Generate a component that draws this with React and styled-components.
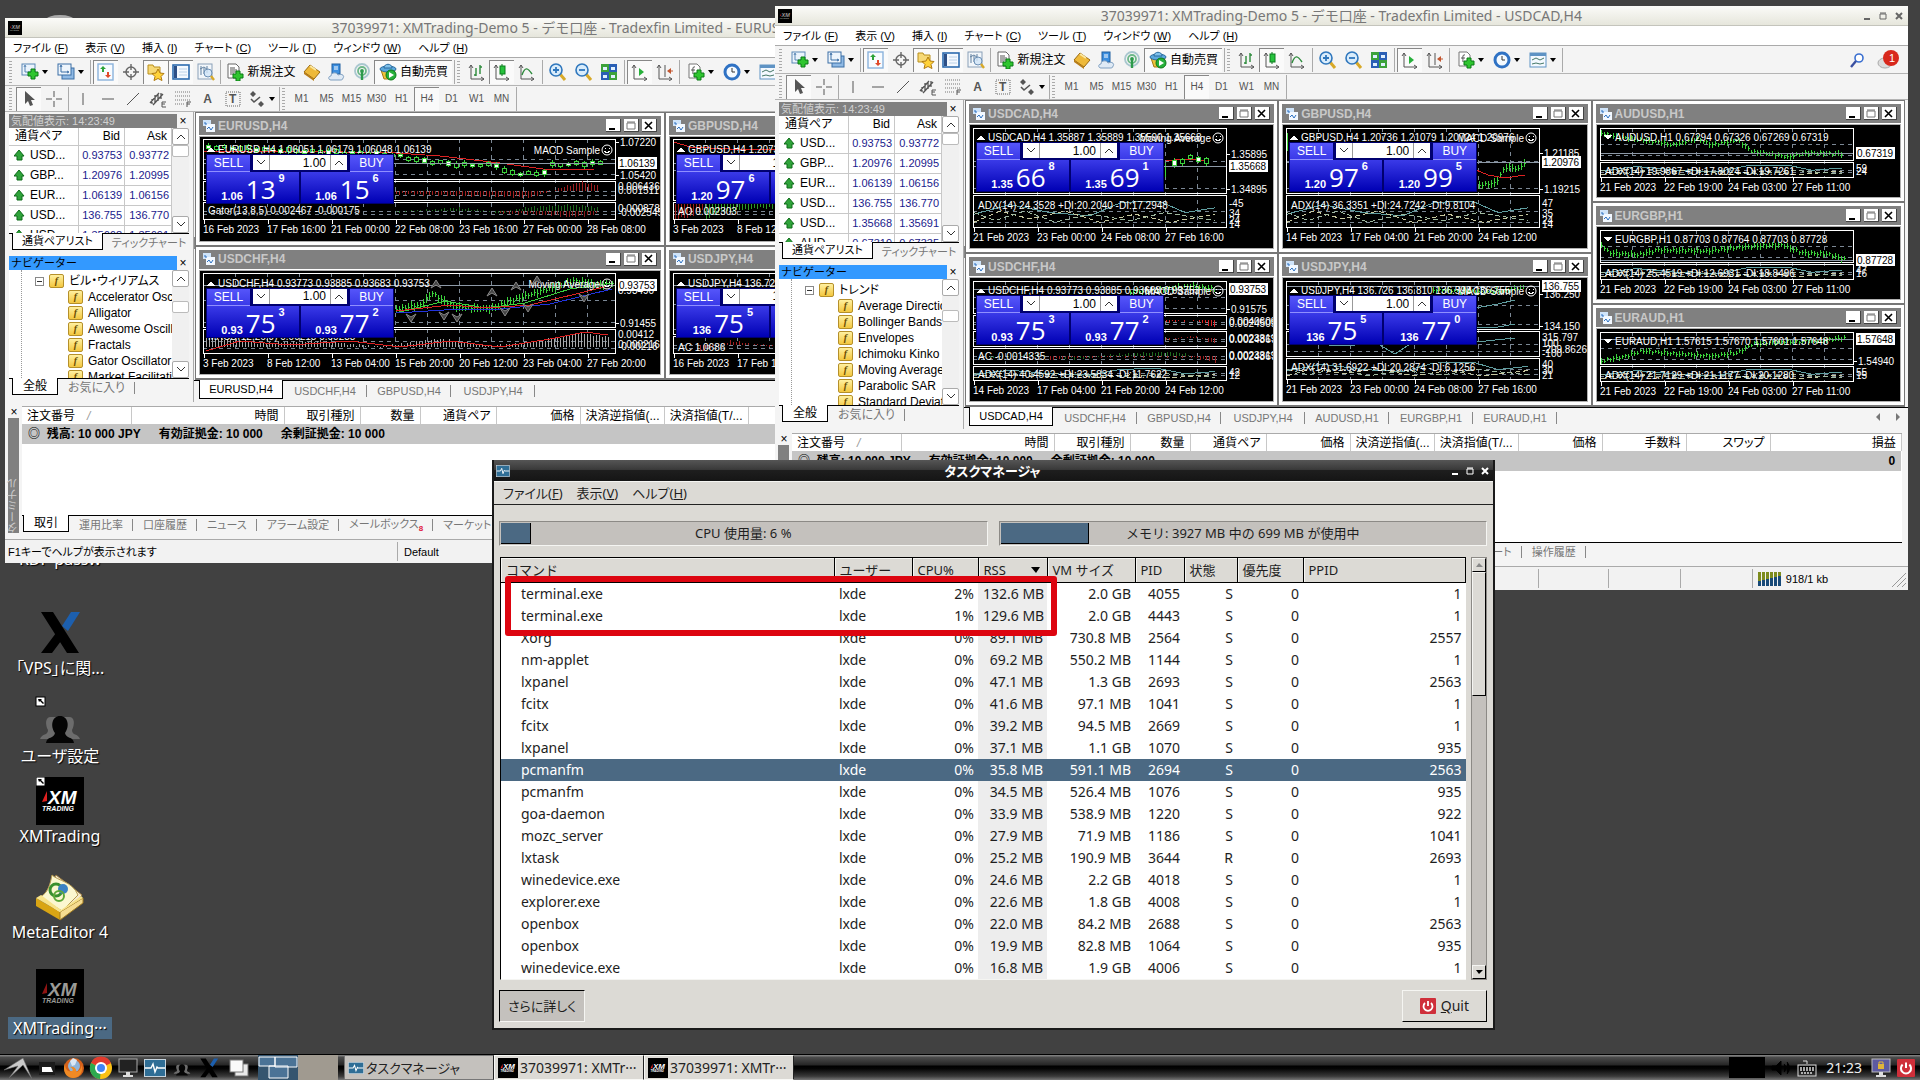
import React from "react";
import styled, { createGlobalStyle, css } from "styled-components";

const GlobalStyle = createGlobalStyle`
  * {
    box-sizing: border-box;
  }

  body {
    margin: 0;
    background: #414141;
    overflow: hidden;
  }

  button,
  input {
    font: inherit;
    color: inherit;
    margin: 0;
    padding: 0;
    border: 0;
    background: none;
    border-radius: 0;
  }

  table {
    border-collapse: collapse;
    table-layout: fixed;
    width: 100%;
  }

  td,
  th {
    padding: 0;
    font-weight: inherit;
    text-align: left;
    overflow: hidden;
    white-space: nowrap;
  }

  a {
    color: inherit;
    text-decoration: none;
  }

  svg {
    display: block;
    flex: none;
  }
`;

const uiFont = `"Noto Sans", "Noto Sans CJK JP", sans-serif`;
const mtFont = `"Liberation Sans", "Noto Sans CJK JP", sans-serif`;

/* ---------- toolbar icons ---------- */

const Plus = ({ x, y }) => (
  <path
    d={`M${x + 3} ${y}h4v3h3v4h-3v3h-4v-3h-3v-4h3z`}
    fill="#2fc52f"
    stroke="#0b7a16"
    strokeWidth="1"
  />
);

const icons = {
  newChart: (
    <>
      <rect x="1" y="1" width="13" height="11" fill="#eaf3fc" stroke="#5a87b5" />
      <path d="M4 3v6h7M3 4l1-2 1 2" stroke="#5a87b5" fill="none" />
      <Plus x={7} y={6} />
    </>
  ),
  profiles: (
    <>
      <rect x="5" y="5" width="12" height="11" fill="#8fb9e4" stroke="#3b6ea5" />
      <rect x="1" y="1" width="13" height="11" fill="#eef5fc" stroke="#3b6ea5" />
      <path d="M4 3v6h7M3 4l1-2 1 2M10 8l2 1-2 1" stroke="#3b6ea5" fill="none" />
    </>
  ),
  watch: (
    <>
      <rect x="1" y="1" width="15" height="16" fill="#f7fbff" stroke="#8ab2dc" strokeWidth="1.4" />
      <path d="M6 3l3 3H7v3H5V6H3z" fill="#2ca33a" />
      <path d="M11 15l-3-3h2V9h2v3h2z" fill="#e04a2a" />
    </>
  ),
  cross: (
    <g stroke="#666" fill="none" strokeWidth="1.4">
      <circle cx="9" cy="9" r="5" />
      <path d="M9 1v6M9 11v6M1 9h6M11 9h6" />
    </g>
  ),
  favorites: (
    <>
      <path d="M1 2h5l1 2h6v7H1z" fill="#f7d976" stroke="#b98f1d" />
      <path d="M11 6l2 4 4 .5-3 3 1 4-4-2-4 2 1-4-3-3 4-.5z" fill="#ffd23a" stroke="#b07a10" />
    </>
  ),
  terminal: (
    <>
      <rect x="1" y="2" width="16" height="14" fill="#f4f9ff" stroke="#2d6cb0" strokeWidth="1.6" />
      <rect x="2" y="3" width="3" height="12" fill="#2d4f86" />
      <path d="M7 6h8M7 9h8M7 12h8" stroke="#bcd2e8" />
    </>
  ),
  tester: (
    <>
      <rect x="1" y="1" width="14" height="15" fill="#f2f6fa" stroke="#8aa0b8" />
      <path d="M4 3v9M7 5v6M10 3v7M3 6l4-2 4 3" stroke="#5f7f9f" fill="none" />
      <circle cx="11" cy="10" r="4" fill="#cfe5f8" fillOpacity=".8" stroke="#6b8fb5" />
      <path d="M14 13l3 4" stroke="#d8a928" strokeWidth="2.4" />
    </>
  ),
  order: (
    <>
      <path d="M2 1h8l3 3v11H2z" fill="#fff" stroke="#666" />
      <path d="M4 5h5M4 7h7M4 9h7M4 11h4" stroke="#555" />
      <Plus x={7} y={8} />
    </>
  ),
  book: (
    <>
      <path d="M7 2l10 7-6 7L1 9z" fill="#eeb93a" stroke="#9a6a10" />
      <path d="M1 9l10 7v2L1 11z" fill="#b87d18" />
      <path d="M7 3l6 4" stroke="#fbe7a0" strokeWidth="2" />
    </>
  ),
  cloud: (
    <>
      <rect x="4" y="1" width="8" height="10" fill="#3c8fe0" stroke="#1f5f9f" />
      <path d="M6 4h4M6 6h4" stroke="#fff" />
      <path d="M3 17c-3 0-3-4 0-4 0-4 6-4 7-1 4-2 7 1 5 3 0 2-2 2-3 2z" fill="#dfeaf5" stroke="#7f9fc0" />
    </>
  ),
  signal: (
    <g fill="none" strokeWidth="1.8">
      <circle cx="9" cy="8" r="7" stroke="#a9c7cf" />
      <circle cx="9" cy="8" r="4" stroke="#6db889" />
      <circle cx="9" cy="8" r="1" stroke="#2c9a4b" />
      <path d="M9 9v8" stroke="#2c9a4b" strokeWidth="2.4" />
    </g>
  ),
  auto: (
    <>
      <path d="M2 7h14l-2 9H5z" fill="#f0c23a" stroke="#a77a16" />
      <ellipse cx="9" cy="6" rx="8" ry="3" fill="#5ba8dd" stroke="#2a6b9f" />
      <path d="M5 5c0-5 8-5 8 0z" fill="#7fc0ea" stroke="#2a6b9f" />
      <circle cx="12" cy="12" r="5" fill="#27b03b" stroke="#0b7a16" />
      <path d="M10 9l5 3-5 3z" fill="#fff" />
    </>
  ),
  bars: (
    <>
      <path d="M3 2v14h13M1 5l2-3 2 3M13 14l3 2-3 2" stroke="#555" fill="none" />
      <path d="M8 5v8M8 12h-2M12 2v9M12 4h2" stroke="#2b8a3a" fill="none" strokeWidth="1.4" />
    </>
  ),
  candles: (
    <>
      <path d="M3 2v14h13M1 5l2-3 2 3M13 14l3 2-3 2" stroke="#555" fill="none" />
      <rect x="7" y="3" width="5" height="8" fill="#27c23d" stroke="#0a7d1c" />
      <path d="M9 1v2M9 11v2" stroke="#0a7d1c" />
    </>
  ),
  line: (
    <>
      <path d="M3 2v14h13M1 5l2-3 2 3M13 14l3 2-3 2" stroke="#555" fill="none" />
      <path d="M4 12c3-9 6-7 10-1" stroke="#2b8a3a" fill="none" strokeWidth="1.4" />
    </>
  ),
  zoomIn: (
    <>
      <path d="M11 11l5 6" stroke="#d8a928" strokeWidth="3" />
      <circle cx="7" cy="7" r="6" fill="#d9ecfb" stroke="#2f77bd" strokeWidth="1.6" />
      <path d="M4 7h6M7 4v6" stroke="#2f77bd" strokeWidth="1.8" />
    </>
  ),
  zoomOut: (
    <>
      <path d="M11 11l5 6" stroke="#d8a928" strokeWidth="3" />
      <circle cx="7" cy="7" r="6" fill="#d9ecfb" stroke="#2f77bd" strokeWidth="1.6" />
      <path d="M4 7h6" stroke="#2f77bd" strokeWidth="1.8" />
    </>
  ),
  tiles: (
    <>
      <rect x="1" y="1" width="8" height="8" fill="#3ca23a" />
      <rect x="9" y="1" width="8" height="8" fill="#2a5fb5" />
      <rect x="1" y="9" width="8" height="8" fill="#2a5fb5" />
      <rect x="9" y="9" width="8" height="8" fill="#3ca23a" />
      <path d="M3 4h4v3H3zM11 4h4v3h-4zM3 12h4v3H3zM11 12h4v3h-4z" fill="#dff0ff" />
    </>
  ),
  scroll: (
    <>
      <path d="M3 2v14h13M1 5l2-3 2 3M13 14l3 2-3 2" stroke="#555" fill="none" />
      <path d="M8 5l5 4-5 4z" fill="#27b03b" />
    </>
  ),
  shift: (
    <>
      <path d="M3 2v14h13M1 5l2-3 2 3M9 2v12M13 14l3 2-3 2" stroke="#555" fill="none" />
      <path d="M15 5l-4 3 4 3z" fill="#c2552e" />
      <path d="M14 8h3" stroke="#c2552e" />
    </>
  ),
  indicator: (
    <>
      <path d="M2 1h8l3 3v11H2z" fill="#fff" stroke="#777" />
      <path d="M8 4c-3-1-2 3-2 7M4 7h4" stroke="#555" fill="none" />
      <Plus x={7} y={7} />
    </>
  ),
  clock: (
    <>
      <circle cx="9" cy="9" r="7" fill="#f4faff" stroke="#2f72c4" strokeWidth="3" />
      <path d="M9 5v4h3" stroke="#333" fill="none" />
    </>
  ),
  template: (
    <>
      <rect x="1" y="2" width="16" height="14" fill="#f4f9ff" stroke="#5f93c4" />
      <rect x="1" y="2" width="16" height="3" fill="#5f93c4" />
      <path d="M3 9l4-2 4 2 4-2M3 13l4-1 4 1 4-1" stroke="#476" fill="none" />
    </>
  ),
  cursor: <path d="M5 1v13l3-3 2 5 3-1-2-5h4z" fill="#555" />,
  crosshair: <path d="M9 1v6M9 11v6M1 9h6M11 9h6" stroke="#555" />,
  vline: <path d="M9 3v12" stroke="#555" />,
  hline: <path d="M3 9h12" stroke="#555" />,
  trend: <path d="M3 15L15 3" stroke="#555" />,
  channel: (
    <>
      <path d="M1 13L10 3M4 15L14 4M3 9v5M6 5v8M9 4v7M12 3v6" stroke="#555" fill="none" strokeWidth="1.3" />
      <path d="M17 12h-4v5h4M13 14h3" stroke="#555" fill="none" />
    </>
  ),
  fibo: (
    <>
      <path d="M1 2h16M1 6h16M1 10h16M1 14h10" stroke="#777" strokeDasharray="1 1" />
      <path d="M17 12h-4v5M13 14h3" stroke="#555" fill="none" />
    </>
  ),
  arrows: (
    <>
      <path d="M5 1l3 3-3 3-3-3zM13 11l3 3-3 3-3-3z" fill="#555" />
      <path d="M3 9l3 3 6-5" stroke="#555" fill="none" strokeWidth="1.6" />
    </>
  ),
};

const Icon = ({ name, size = 18 }) => (
  <svg width={size} height={size} viewBox="0 0 18 18">
    {icons[name]}
  </svg>
);

const XmLogo = ({ size, dim }) => (
  <svg width={size} height={size} viewBox="0 0 48 48">
    <rect width="48" height="48" fill="#000" />
    <path d="M6 25l5-11v10z" fill={dim ? "#8f1414" : "#e02020"} />
    <g
      fill={dim ? "#9a9a96" : "#fff"}
      fontFamily="Liberation Sans"
      fontWeight="bold"
      fontStyle="italic"
    >
      <text x="12" y="27" fontSize="19">XM</text>
      <text x="6" y="34" fontSize="7">TRADING</text>
    </g>
  </svg>
);

/* ---------- charts ---------- */

const C = { green: "#3bd13b", red: "#d22", blue: "#2233dd", teal: "#5f9ea0", pale: "#c9c9a0" };

const yAt = (pts, x) => {
  for (let i = 1; i < pts.length; i++) {
    if (x <= pts[i][0]) {
      const [x0, y0] = pts[i - 1];
      const [x1, y1] = pts[i];
      return y0 + ((x - x0) / (x1 - x0)) * (y1 - y0);
    }
  }
  return pts[pts.length - 1][1];
};

const Mark = ({ kind, pts, color = C.green, amp = 6, base }) => {
  const x0 = pts[0][0];
  const x1 = pts[pts.length - 1][0];
  if (kind === "line") {
    return (
      <polyline points={pts.map((p) => p.join(",")).join(" ")} fill="none" stroke={color} />
    );
  }
  if (kind === "dash") {
    return (
      <polyline
        points={pts.map((p) => p.join(",")).join(" ")}
        fill="none"
        stroke={color}
        strokeDasharray="5 3"
      />
    );
  }
  const out = [];
  const step = kind === "candles" ? 8 : 3;
  for (let x = x0, i = 0; x <= x1; x += step, i++) {
    const y = yAt(pts, x) + Math.sin(i * 2.3);
    const h = amp * (0.8 + 0.2 * Math.sin(i * 5.1 + 1));
    if (kind === "candles") {
      out.push(
        <g key={x} stroke={color}>
          <path d={`M${x + 2} ${y - h}v${h * 2}`} />
          <rect x={x} y={y - h / 2} width="4" height={h} fill={i % 3 ? "#000" : "#fff"} />
        </g>
      );
    } else if (kind === "hist") {
      out.push(<path key={x} d={`M${x}.5 ${base}V${y}`} stroke={color} />);
    } else {
      out.push(<path key={x} d={`M${x}.5 ${y - h / 2}v${h}M${x} ${y}h2`} stroke={color} />);
    }
  }
  return <g fill="none">{out}</g>;
};

const ChartSvg = styled.svg`
  width: 100%;
  height: 100%;
  font-family: "Liberation Sans", sans-serif;
  font-size: 10px;
`;

const Chart = ({ data }) => {
  const { right, boxes, dates, header, expert, down, scale, price, marks, labels = [], jumble = [] } = data;
  const last = boxes[boxes.length - 1][1];
  const grid = [];
  for (let x = 35; x < right; x += 32) grid.push(x);
  return (
    <ChartSvg shapeRendering="crispEdges">
      {grid.map((x) => (
        <path key={x} d={`M${x}.5 ${boxes[0][0]}V${last}`} stroke="#7b8794" strokeDasharray="4 4" />
      ))}
      {boxes.map(([t, b]) => (
        <React.Fragment key={t}>
          <path
            d={`M3 ${b - 5}.5H${right}M3 ${Math.round((t + b) / 2)}.5H${right}`}
            stroke="#7b8794"
            strokeDasharray="4 4"
          />
          <rect x="3.5" y={t + 0.5} width={right - 3} height={b - t} fill="none" stroke="#fff" />
        </React.Fragment>
      ))}
      {marks.map((m, i) => (
        <Mark key={i} {...m} />
      ))}
      <path d={`M4 ${price[1]}.5H${right}`} stroke="#8d99a6" />
      <g fill="#fff">
        <path d={down ? "M7 10h8l-4 5z" : "M7 15h8l-4-5z"} />
        <text x="18" y="16">{header}</text>
        {expert && (
          <>
            <text x={right - 15} y="17" textAnchor="end">{expert}</text>
            <circle cx={right - 8} cy="13" r="5" fill="none" stroke="#fff" shapeRendering="auto" />
            <path d={`M${right - 10} 11v1M${right - 6} 11v1M${right - 11} 14q3 3 6 0`} stroke="#fff" fill="none" />
          </>
        )}
        {labels.map(([text, y]) => (
          <text key={y} x="8" y={y}>{text}</text>
        ))}
        {scale.map(([text, y]) => (
          <React.Fragment key={text}>
            <path d={`M${right} ${y - 4}.5h4`} stroke="#fff" />
            <text x={right + 5} y={y}>{text}</text>
          </React.Fragment>
        ))}
        {jumble.map(([text, y], i) => (
          <text key={i} x={right + 3} y={y}>{text}</text>
        ))}
        {dates.map((d, i) => (
          <React.Fragment key={d}>
            <path d={`M${4 + i * 64}.5 ${last}v5`} stroke="#fff" />
            <text x={3 + i * 64} y={last + 14}>{d}</text>
          </React.Fragment>
        ))}
        <rect x={right + 3} y={price[1] - 6} width="39" height="12" />
        <text x={right + 4} y={price[1] + 4} fill="#000">{price[0]}</text>
      </g>
    </ChartSvg>
  );
};

const adx = (t, b) => {
  const h = b - t;
  return [
    { kind: "line", color: C.teal, pts: [[4, t + h * 0.6], [40, t + h * 0.3], [80, t + h * 0.55], [120, t + h * 0.65], [150, t + h * 0.25], [170, t + h * 0.2], [190, t + h * 0.2], [215, t + h * 0.55], [245, t + h * 0.4]] },
    { kind: "dash", color: C.pale, pts: [[4, t + h * 0.85], [30, t + h * 0.5], [60, t + h * 0.75], [95, t + h * 0.5], [130, t + h * 0.85], [165, t + h * 0.6], [200, t + h * 0.85], [245, t + h * 0.6]] },
    { kind: "dash", color: "#9fb9a0", pts: [[4, t + h * 0.55], [25, t + h * 0.8], [55, t + h * 0.5], [85, t + h * 0.85], [120, t + h * 0.6], [160, t + h * 0.8], [195, t + h * 0.55], [245, t + h * 0.8]] },
  ];
};

const datesShort = ["21 Feb 2023", "22 Feb 19:00", "24 Feb 03:00", "27 Feb 11:00"];
const datesA = ["21 Feb 2023", "23 Feb 00:00", "24 Feb 08:00", "27 Feb 16:00"];
const datesB = ["14 Feb 2023", "17 Feb 04:00", "21 Feb 20:00", "24 Feb 12:00"];

const leftCharts = [
  [
    {
      title: "EURUSD,H4",
      right: 415,
      boxes: [[2, 42], [44, 63], [65, 82]],
      header: "EURUSD,H4  1.06051 1.06179 1.06048 1.06139",
      expert: "MACD Sample",
      scale: [["1.07220", 9], ["1.05420", 42]],
      price: ["1.06139", 26],
      jumble: [["0.006436", 53], ["0.001511", 57], ["0.000878", 75], ["-0.002545", 79]],
      labels: [["Gator(13,8,5) 0.002467 -0.000175", 77]],
      dates: ["16 Feb 2023", "17 Feb 16:00", "21 Feb 00:00", "22 Feb 08:00", "23 Feb 16:00", "27 Feb 00:00", "28 Feb 08:00"],
      ticket: ["1.06", "13", "9", "1.06", "15", "6"],
      marks: [
        { kind: "line", color: C.red, pts: [[4, 14], [90, 14], [196, 16], [240, 19], [300, 26], [350, 33], [395, 32]] },
        { kind: "candles", amp: 4, pts: [[6, 10], [100, 14], [190, 18], [220, 24], [260, 28], [295, 28], [305, 36], [340, 37], [350, 28], [398, 26]] },
        { kind: "hist", color: "#a02020", base: 54, pts: [[196, 57], [240, 58], [330, 60], [350, 54], [380, 45], [398, 48]] },
        { kind: "hist", color: "#1f6a1f", base: 74, pts: [[196, 75], [260, 71], [300, 76], [330, 70], [370, 68], [398, 70]] },
        { kind: "hist", color: "#8a1c1c", base: 74, pts: [[300, 76], [350, 78], [372, 80], [398, 77]] },
      ],
    },
    {
      title: "GBPUSD,H4",
      right: 415,
      boxes: [[2, 63], [65, 82]],
      header: "GBPUSD,H4  1.20736 1.21079 1.20724 1.20976",
      scale: [],
      price: ["1.20976", 26],
      labels: [["AO 0.002303", 78]],
      dates: ["3 Feb 2023", "8 Feb 12:00", "13 Feb 04:00"],
      ticket: ["1.20", "97", "6", "1.20", "99", "5"],
      marks: [
        { kind: "line", color: C.red, pts: [[4, 5], [20, 10], [60, 12], [120, 12]] },
        { kind: "hist", color: "#a02020", base: 67, pts: [[5, 82], [20, 80], [32, 72]] },
        { kind: "hist", color: "#2c9a2c", base: 67, pts: [[36, 82], [50, 75], [90, 71], [140, 72]] },
      ],
    },
  ],
  [
    {
      title: "USDCHF,H4",
      right: 415,
      boxes: [[2, 56], [58, 82]],
      header: "USDCHF,H4  0.93773 0.93885 0.93683 0.93753",
      expert: "Moving Average",
      scale: [["0.91455", 56]],
      price: ["0.93753", 14],
      jumble: [["0.93490", 23], ["0.00412", 67], ["0.000216", 77], ["-0.00216", 79]],
      labels: [["MACD(12,26,9) 0.00218 0.00238", 69]],
      dates: ["3 Feb 2023", "8 Feb 12:00", "13 Feb 04:00", "15 Feb 20:00", "20 Feb 12:00", "23 Feb 04:00", "27 Feb 20:00"],
      ticket: ["0.93", "75", "3", "0.93", "77", "2"],
      marks: [
        { kind: "bars", amp: 9, pts: [[196, 38], [220, 34], [232, 22], [240, 28], [255, 36], [290, 38], [310, 30], [335, 22], [350, 17], [375, 10], [400, 14], [412, 12]] },
        { kind: "line", color: C.green, pts: [[196, 42], [245, 30], [285, 37], [325, 32], [370, 18], [412, 12]] },
        { kind: "line", color: C.red, pts: [[196, 40], [250, 34], [285, 37], [330, 34], [380, 22], [412, 14]] },
        { kind: "line", color: C.blue, pts: [[196, 42], [260, 38], [300, 38], [350, 33], [412, 18]] },
        { kind: "hist", color: "#aaa", base: 76, pts: [[6, 66], [60, 72], [120, 70], [180, 76], [240, 68], [290, 75], [340, 70], [380, 62], [408, 66]] },
        { kind: "line", color: C.red, pts: [[6, 80], [40, 70], [90, 74], [150, 70], [200, 76], [250, 70], [300, 76], [350, 68], [385, 61], [408, 64]] },
      ],
      fractals: [[236, 12], [292, 20], [316, 14], [337, 8], [211, 48, 1], [244, 46, 1], [257, 48, 1], [305, 42, 1], [328, 38, 1], [384, 28, 1]],
    },
    {
      title: "USDJPY,H4",
      right: 415,
      boxes: [[2, 63], [65, 82]],
      header: "USDJPY,H4  136.726 136.810 136.598 136.755",
      scale: [],
      price: ["136.755", 14],
      labels: [["AC 1.0686", 80]],
      dates: ["16 Feb 2023", "17 Feb 16:00", "21 Feb 00:00"],
      ticket: ["136", "75", "5", "136", "77", "0"],
      marks: [{ kind: "hist", color: "#a02020", base: 74, pts: [[30, 80], [60, 70], [120, 78]] }],
    },
  ],
];

const rightCharts = [
  [
    {
      title: "USDCAD,H4",
      right: 256,
      boxes: [[3, 68], [70, 102]],
      header: "USDCAD,H4  1.35887 1.35889 1.35590 1.35668",
      expert: "Moving Average",
      scale: [["1.35895", 33], ["1.34895", 68]],
      price: ["1.35668", 41],
      jumble: [["-45", 82], ["34", 92], ["24", 99], ["14", 103]],
      labels: [["ADX(14) 24.3528 +DI:20.2040 -DI:17.2948", 84]],
      dates: datesA,
      ticket: ["1.35", "66", "8", "1.35", "69", "1"],
      marks: [
        { kind: "line", color: C.green, pts: [[195, 52], [195, 38]] },
        { kind: "line", color: C.red, pts: [[196, 36], [215, 34], [238, 36]] },
        { kind: "candles", amp: 5, pts: [[202, 38], [210, 36], [220, 32], [234, 36]] },
        ...adx(70, 102),
      ],
    },
    {
      title: "USDCHF,H4",
      right: 256,
      boxes: [[3, 35], [37, 51], [53, 68], [70, 86], [88, 102]],
      header: "USDCHF,H4  0.93773 0.93885 0.93683 0.93753",
      expert: "MACD Sample",
      scale: [["0.91575", 35]],
      price: ["0.93753", 11],
      jumble: [["0.0040609", 47], ["0.0024509", 49], ["0.0023319", 64], ["0.0024867", 65], ["0.0023319", 81], ["0.0024867", 82], ["42", 98], ["12", 101]],
      labels: [["AC -0.0014335", 82], ["ADX(14) 40.4592 +DI:23.5834 -DI:11.7622", 100]],
      dates: datesB,
      ticket: ["0.93", "75", "3", "0.93", "77", "2"],
      marks: [
        { kind: "bars", amp: 7, pts: [[160, 14], [190, 12], [220, 8], [245, 11]] },
        { kind: "hist", color: C.red, base: 42, pts: [[196, 44], [225, 42], [245, 50]] },
        { kind: "hist", color: "#a02020", base: 60, pts: [[196, 62], [225, 58], [245, 66]] },
        { kind: "hist", color: "#1f6a1f", base: 78, pts: [[20, 80], [60, 76], [100, 81], [150, 76], [200, 74], [220, 76]] },
        { kind: "hist", color: "#a02020", base: 78, pts: [[80, 82], [105, 79], [170, 79], [222, 79], [245, 84]] },
        ...adx(88, 102),
      ],
    },
  ],
  [
    {
      title: "GBPUSD,H4",
      right: 256,
      boxes: [[3, 68], [70, 102]],
      header: "GBPUSD,H4  1.20736 1.21079 1.20724 1.20976",
      expert: "MACD Sample",
      scale: [["1.21185", 32], ["1.19215", 68]],
      price: ["1.20976", 37],
      jumble: [["47", 82], ["35", 92], ["24", 99], ["14", 103]],
      labels: [["ADX(14) 36.3351 +DI:24.7242 -DI:9.8104", 84]],
      dates: datesB,
      ticket: ["1.20", "97", "6", "1.20", "99", "5"],
      marks: [
        { kind: "line", color: C.red, pts: [[193, 45], [205, 50], [222, 53], [242, 50]] },
        { kind: "bars", amp: 9, pts: [[196, 60], [212, 58], [222, 42], [235, 44], [243, 36]] },
        { kind: "line", color: C.green, pts: [[4, 26], [4, 8]] },
        ...adx(70, 102),
      ],
    },
    {
      title: "USDJPY,H4",
      right: 256,
      boxes: [[3, 51], [53, 78], [80, 101]],
      header: "USDJPY,H4  136.726 136.810 136.598 136.755",
      expert: "MACD Sample",
      scale: [["136.250", 20], ["134.150", 52]],
      price: ["136.755", 8],
      jumble: [["315.797", 63], ["100", 69], ["-209.8626", 75], ["-100", 79], ["40", 90], ["30", 96], ["21", 101]],
      labels: [["ADX(14) 31.6922 +DI:20.2874 -DI:6.1256", 93]],
      dates: datesA,
      ticket: ["136", "75", "5", "136", "77", "0"],
      marks: [
        { kind: "bars", amp: 6, pts: [[150, 12], [200, 14], [220, 13], [240, 9]] },
        { kind: "line", color: C.teal, pts: [[193, 30], [215, 26], [232, 22]] },
        { kind: "line", color: C.teal, pts: [[193, 50], [215, 49], [232, 46]] },
        { kind: "line", color: C.teal, pts: [[20, 60], [50, 68], [95, 66], [112, 76], [130, 64], [193, 64], [232, 60]] },
        ...adx(80, 101),
      ],
    },
  ],
  [
    {
      title: "AUDUSD,H1",
      down: true,
      right: 256,
      boxes: [[3, 35], [37, 52]],
      header: "AUDUSD,H1  0.67294 0.67326 0.67269 0.67319",
      scale: [],
      price: ["0.67319", 28],
      jumble: [["59", 47], ["24", 50]],
      labels: [["ADX(14) 19.9867 +DI:17.8024 -DI:19.7261", 50]],
      dates: datesShort,
      marks: [
        { kind: "bars", amp: 6, pts: [[4, 8], [20, 12], [60, 17], [75, 20], [100, 14], [115, 20], [140, 15], [155, 27], [175, 29], [190, 32], [210, 28], [245, 29]] },
        ...adx(37, 52),
      ],
    },
    {
      title: "EURGBP,H1",
      down: true,
      right: 256,
      boxes: [[3, 35], [37, 52]],
      header: "EURGBP,H1  0.87703 0.87764 0.87703 0.87728",
      scale: [],
      price: ["0.87728", 33],
      jumble: [["47", 47], ["16", 50]],
      labels: [["ADX(14) 25.4519 +DI:12.6931 -DI:18.8496", 50]],
      dates: datesShort,
      marks: [
        { kind: "bars", amp: 7, pts: [[4, 18], [12, 26], [40, 28], [60, 23], [110, 24], [145, 20], [185, 18], [205, 26], [230, 27], [248, 33]] },
        ...adx(37, 52),
      ],
    },
    {
      title: "EURAUD,H1",
      down: true,
      right: 256,
      boxes: [[3, 35], [37, 52]],
      header: "EURAUD,H1  1.57615 1.57670 1.57601 1.57648",
      scale: [["1.54940", 36]],
      price: ["1.57648", 10],
      jumble: [["55", 47], ["15", 50]],
      labels: [["ADX(14) 21.7129 +DI:21.1177 -DI:20.1280", 50]],
      dates: datesShort,
      marks: [
        { kind: "bars", amp: 6, pts: [[4, 32], [25, 28], [45, 22], [80, 25], [115, 27], [140, 24], [155, 15], [185, 13], [220, 12], [248, 9]] },
        ...adx(37, 52),
      ],
    },
  ],
];

/* ---------- trading terminal window ---------- */

const Terminal = styled.section`
  position: absolute;
  top: ${(p) => p.$top}px;
  left: ${(p) => p.$left}px;
  width: 59%;
  display: flex;
  flex-direction: column;
  background: #f4f4f4;
  font: 12px/16px ${mtFont};
  font-feature-settings: "palt" 1;
  color: #000;
`;

const TitleBar = styled.header`
  height: 20px;
  display: flex;
  align-items: center;
  padding: 0 5px 0 3px;
  gap: 8px;
  background: linear-gradient(#fbfbf8, #e6e6dc);
  border-bottom: 1px solid #c4c4bc;
  font: 14px/18px ${uiFont};
  color: #777;

  h2 {
    flex: 1;
    margin: 0;
    padding-left: 28px;
    font: inherit;
    text-align: center;
    white-space: nowrap;
  }
`;

const WinButton = styled.button`
  width: 8px;
  height: 8px;
  display: grid;
  place-items: center;
  color: ${(p) => p.$color || "#666"};
`;

const WindowButtons = ({ color }) => (
  <>
    <WinButton $color={color} aria-label="最小化">
      <svg width="8" height="8"><path d="M1 7h6" stroke="currentColor" strokeWidth="2" /></svg>
    </WinButton>
    <WinButton $color={color} aria-label="最大化">
      <svg width="8" height="8"><path d="M1 2h6v5H1zM1 1h6" stroke="currentColor" fill="none" /></svg>
    </WinButton>
    <WinButton $color={color} aria-label="閉じる">
      <svg width="8" height="8"><path d="M1 1l6 6M7 1L1 7" stroke="currentColor" strokeWidth="2" /></svg>
    </WinButton>
  </>
);

const MenuBar = styled.nav`
  height: 20px;
  display: flex;
  align-items: center;
  gap: 17px;
  padding: 0 8px;
  background: #fff;
  border-bottom: 1px solid #aaa;
  font-size: 11px;
`;

const ToolRow = styled.div`
  height: ${(p) => p.$height}px;
  display: flex;
  align-items: center;
  background: #f4f4f4;
  padding-left: 4px;
  border-bottom: 1px solid #b4b4b4;
`;

const Handle = styled.span`
  width: 3px;
  height: 22px;
  margin-right: 4px;
  background: repeating-linear-gradient(#aaa 0 1px, transparent 1px 3px);
`;

const Separator = styled.span`
  width: 1px;
  height: 24px;
  margin: 0 2px;
  background: #aaa;
`;

const Tool = styled.button`
  width: ${(p) => p.$width || 25}px;
  height: 24px;
  display: flex;
  align-items: center;
  justify-content: center;
  gap: 3px;
  white-space: nowrap;
  color: ${(p) => p.$color || "#000"};
  ${(p) =>
    p.$pressed &&
    css`
      background: #fafafa;
      border-top: 1px solid #888;
      border-left: 1px solid #888;
    `}
`;

const Period = styled(Tool)`
  font-size: 10px;
`;

const Caret = styled.span`
  border: 3px solid transparent;
  border-top: 4px solid #000;
  border-bottom: 0;
`;

const Spacer = styled.span`
  flex: 1;
`;

const Body = styled.div`
  display: flex;
  height: ${(p) => p.$height}px;
`;

const Side = styled.aside`
  width: 189px;
  display: flex;
  flex-direction: column;
  padding: 2px 4px 0;
  border-right: 1px solid #aaa;
`;

const PanelHead = styled.header`
  height: 14px;
  display: flex;
  align-items: center;
  justify-content: space-between;

  h3 {
    width: 168px;
    margin: 0;
    padding-left: 2px;
    font: 11px/14px ${mtFont};
    background: ${(p) => (p.$active ? "#3399ff" : "#808080")};
    color: ${(p) => (p.$active ? "#000" : "#d0d0d0")};
  }
`;

const CloseMark = styled.button`
  width: 12px;
  font-size: 12px;
  line-height: 12px;
`;

const ListBox = styled.div`
  display: flex;
  height: ${(p) => p.$height}px;
  background: #fff;
  border-bottom: 1px solid #000;
  overflow: hidden;
`;

const QuoteTable = styled.table`
  flex: 1;
  width: 163px;

  th {
    height: 17px;
    padding: 0 4px;
    border-right: 1px solid #c8c8c8;
  }

  th:first-child {
    padding: 0 6px;
  }

  td {
    height: 20px;
    padding: 0 2px;
    color: #1a1a8c;
    text-align: right;
    border-top: 1px solid #c8c8c8;
    border-right: 1px solid #c8c8c8;
    font-size: 11px;
  }

  th + th {
    text-align: right;
  }

  td:first-child {
    padding: 0 5px;
    color: #000;
    text-align: left;
    font-size: 12px;
  }

  tr td:first-child svg {
    display: inline-block;
    vertical-align: -2px;
    margin-right: 5px;
  }
`;

const ScrollBar = styled.div`
  width: 17px;
  display: flex;
  flex-direction: column;
  background: #f0f0f0;

  button {
    height: 17px;
    display: grid;
    place-items: center;
    background: #fff;
    border: 1px solid #aaa;
    border-radius: 2px;
  }

  button:last-child {
    margin-top: auto;
  }
`;

const Thumb = styled.span`
  height: 12px;
  margin-top: ${(p) => p.$offset}px;
  background: #fff;
  border: 1px solid #bbb;
  border-radius: 2px;
`;

const Chevron = ({ up }) => (
  <svg width="8" height="5">
    <path d={up ? "M0 5l4-4 4 4" : "M0 0l4 4 4-4"} fill="none" stroke="#333" />
  </svg>
);

const SideScroll = ({ offset = 0 }) => (
  <ScrollBar>
    <button aria-label="上へ"><Chevron up /></button>
    <Thumb $offset={offset} />
    <button aria-label="下へ"><Chevron /></button>
  </ScrollBar>
);

const TabBar = styled.div`
  display: flex;
  height: ${(p) => p.$height || 22}px;
  padding-left: ${(p) => p.$indent || 3}px;
  color: #777;
  ${(p) =>
    p.$line &&
    css`
      border-top: 1px solid #000;
    `}
`;

const Tab = styled.button`
  height: 17px;
  padding: 0 10px;
  white-space: nowrap;
  ${(p) =>
    p.$small &&
    css`
      padding: 0 9px;
      font-size: 11px;
    `}
  ${(p) =>
    p.$wide &&
    css`
      width: 84px;
      height: 19px;
      padding: 0;
      font-size: 11px;
    `}
  ${(p) =>
    p.$active
      ? css`
          background: #fff;
          border: 1px solid #000;
          border-top: 0;
          color: #000;
          margin-top: -1px;
        `
      : css`
          background: linear-gradient(#888, #888) right center / 1px 12px no-repeat;
        `}
`;

const SheetTab = styled(Tab)`
  padding: 0 10px;
  font-size: 11px;
`;

const Unread = styled.sub`
  color: #e02040;
  font: bold 8px/8px "Liberation Sans", sans-serif;
`;

const Tree = styled.ul`
  flex: 1;
  margin: 0 0 0 12px;
  padding: 3px 0 0 12px;
  list-style: none;
  overflow: hidden;
  border-left: 1px dotted #999;

  li {
    height: 16px;
    display: flex;
    align-items: center;
    gap: 5px;
    white-space: nowrap;
    padding-left: 34px;
  }

  li:first-child {
    padding-left: 1px;
  }
`;

const FnIcon = styled.i`
  width: 15px;
  height: 14px;
  flex: none;
  border: 1px solid #b5902a;
  border-radius: 2px;
  background: linear-gradient(#fff0a0, #f3c740);
  font: italic bold 10px/12px "Liberation Serif", serif;
  color: #6b4d00;
  text-align: center;
`;

const Twisty = styled.button`
  width: 9px;
  height: 9px;
  border: 1px solid #888;
  background: linear-gradient(#333, #333) center / 5px 1px no-repeat #fff;
`;

const Mdi = styled.div`
  flex: 1;
  display: flex;
  min-height: 0;
  margin: 0 3px 0 1px;
  border-top: 1px solid #777;
`;

const MdiColumn = styled.div`
  flex: 1;
  display: flex;
  flex-direction: column;
  min-width: 0;
  min-height: 0;
`;

const ChartWindow = styled.article`
  flex: 1 1 0;
  display: flex;
  flex-direction: column;
  min-height: 0;
  padding: 3px 3px 4px;
  background: #fff;
  border: 1px solid #777;
  border-width: 0 1px 2px;
`;

const ChartTitle = styled.header`
  height: 19px;
  display: flex;
  align-items: center;
  gap: 3px;
  padding: 0 4px;
  background: #808080;
  font: bold 12px/18px "Liberation Sans", sans-serif;
  color: #c8c8c8;

  h4 {
    flex: 1;
    margin: 0;
    font: inherit;
  }

  button {
    width: 15px;
    height: 13px;
    display: grid;
    place-items: center;
    background: #fff;
    border-right: 1px solid #444;
    border-bottom: 1px solid #444;
  }
`;

const ChartArea = styled.div`
  flex: 1 1 0;
  position: relative;
  min-height: 0;
  margin: 2px 1px 0;
  background: #000;
  outline: 1px solid #b0b0b0;
  overflow: hidden;
`;

const Ticket = styled.form`
  position: absolute;
  left: 6px;
  top: 17px;
  width: 188px;
  display: grid;
  grid-template-columns: 43px minmax(0, 1fr) 43px;
  background: #000070;
  padding: 1px;
  color: #fff;
  font-family: ${mtFont};
`;

const TradeSide = styled.button`
  height: 17px;
  background: linear-gradient(#5555fa, #3a3ae8);
  font-size: 12px;
  line-height: 16px;
  border-bottom: 1px solid #8f8fff;
`;

const Lots = styled.div`
  height: 15px;
  display: flex;
  margin: 0 3px;
  background: #fff;
  color: #000;

  input {
    flex: 1;
    width: 100%;
    min-width: 0;
    padding-right: 4px;
    text-align: right;
    font-size: 12px;
    border: 1px solid #999;
    border-width: 0 1px;
  }

  button {
    flex: none;
    width: 16px;
    display: grid;
    place-items: center;
  }
`;

const Prices = styled.div`
  grid-column: 1 / -1;
  display: grid;
  grid-template-columns: 1fr 1fr;
  gap: 2px;
`;

const PriceBox = styled.button`
  height: 31px;
  display: flex;
  align-items: flex-end;
  justify-content: center;
  gap: 3px;
  background: linear-gradient(#3a3ae8, #0000b4);

  small {
    font: bold 11px/14px "Liberation Sans", sans-serif;
  }

  b {
    font: 26px/28px "Open Sans", sans-serif;
  }

  sup {
    align-self: flex-start;
    font: bold 11px/13px "Liberation Sans", sans-serif;
  }
`;

const ChartGlyph = () => (
  <svg width="12" height="12">
    <rect width="8" height="6" fill="#cfe4fa" />
    <rect x="3" y="4" width="9" height="8" fill="#f2f8ff" />
    <path d="M1 3h2v2M4 9l2-2 2 3 2-3" stroke="#2a6fc0" fill="none" />
  </svg>
);

const FractalLayer = styled.svg`
  position: absolute;
  left: 0;
  top: 0;
`;

const Fractals = ({ items }) => (
  <FractalLayer width="412" height="60">
    {items.map(([x, y, down]) => (
      <path
        key={x}
        d={down ? `M${x - 5} ${y - 5}l5 8 5-8-5 3z` : `M${x - 5} ${y + 5}l5-8 5 8-5-3z`}
        fill="#444"
        stroke="#888"
      />
    ))}
  </FractalLayer>
);

const Quote = ({ head, big, tip }) => (
  <PriceBox type="button">
    <small>{head}</small>
    <b>{big}</b>
    <sup>{tip}</sup>
  </PriceBox>
);

const ChartPane = ({ data }) => (
  <ChartWindow>
    <ChartTitle>
      <ChartGlyph />
      <h4>{data.title}</h4>
      <button aria-label="最小化">
        <svg width="10" height="9"><path d="M1 8h6" stroke="#000" strokeWidth="2" /></svg>
      </button>
      <button aria-label="最大化">
        <svg width="10" height="9"><path d="M1 2h8v6H1zM1 1h8" stroke="#777" fill="none" /></svg>
      </button>
      <button aria-label="閉じる">
        <svg width="10" height="9"><path d="M1 1l7 7M8 1L1 8" stroke="#000" strokeWidth="1.6" /></svg>
      </button>
    </ChartTitle>
    <ChartArea>
      <Chart data={data} />
      {data.fractals && <Fractals items={data.fractals} />}
      {data.ticket && (
        <Ticket>
          <TradeSide type="button">SELL</TradeSide>
          <Lots>
            <button type="button" aria-label="減らす"><Chevron /></button>
            <input aria-label="数量" defaultValue="1.00" />
            <button type="button" aria-label="増やす"><Chevron up /></button>
          </Lots>
          <TradeSide type="button">BUY</TradeSide>
          <Prices>
            <Quote head={data.ticket[0]} big={data.ticket[1]} tip={data.ticket[2]} />
            <Quote head={data.ticket[3]} big={data.ticket[4]} tip={data.ticket[5]} />
          </Prices>
        </Ticket>
      )}
    </ChartArea>
  </ChartWindow>
);

const Orders = styled.div`
  display: flex;
  margin: 4px 6px 0 3px;
`;

const Rail = styled.div`
  width: 14px;
  display: flex;
  flex-direction: column;

  span {
    flex: 1;
    width: 11px;
    padding-bottom: 2px;
    background: #808080;
    color: #ccc;
    font-size: 11px;
    line-height: 11px;
    writing-mode: vertical-rl;
    transform: rotate(180deg);
  }
`;

const OrdersMain = styled.div`
  flex: 1;
  min-width: 0;
`;

const OrdersSheet = styled.div`
  height: ${(p) => p.$height}px;
  background: #fff;
  border-top: 1px solid #aaa;

  th {
    height: 17px;
    padding: 0 5px;
    text-align: right;
    border-right: 1px solid #c8c8c8;
  }

  th:first-child {
    text-align: left;
  }

  th i {
    color: #999;
    margin-left: 12px;
  }

  td {
    height: 20px;
    padding: 0 6px;
    background: #c5c5c5;
    font: bold 12px/18px "Liberation Sans", "Noto Sans CJK JP", sans-serif;
  }

  td:last-child {
    text-align: right;
  }

  td span {
    margin-right: 18px;
  }
`;

const StatusBar = styled.footer`
  height: 24px;
  display: flex;
  align-items: center;
  margin-top: 6px;
  padding-right: 2px;
  border-top: 1px solid #aaa;
  background: #f2f2f2;
`;

const StatusCell = styled.div`
  height: 19px;
  display: flex;
  align-items: center;
  gap: 4px;
  padding-left: ${(p) => p.$pad || 3}px;
  width: ${(p) => p.$width}px;
  flex: ${(p) => (p.$width ? "none" : 1)};
  font-size: 11px;

  & + & {
    border-left: 1px solid #aaa;
  }
`;

const menu = [
  ["ファイル", "F"],
  ["表示", "V"],
  ["挿入", "I"],
  ["チャート", "C"],
  ["ツール", "T"],
  ["ウィンドウ", "W"],
  ["ヘルプ", "H"],
];

const orderCols = [
  ["注文番号", 109],
  ["時間", 153],
  ["取引種別", 76],
  ["数量", 60],
  ["通貨ペア", 76],
  ["価格", 84],
  ["決済逆指値(...", 84],
  ["決済指値(T/...", 84],
  ["価格", 84],
  ["手数料", 84],
  ["スワップ", 84],
  ["損益"],
];

const orderTabs = [
  "運用比率",
  "口座履歴",
  "ニュース",
  "アラーム設定",
  "メールボックス",
  "マーケット",
  "シグナル",
  "記事",
  "ライブラリ",
  "エキスパート",
  "操作履歴",
];

const Drop = ({ name, width = 36 }) => (
  <Tool $width={width} aria-label={name}>
    <Icon name={name} />
    <Caret />
  </Tool>
);

const TradingWindow = ({ top, left, symbol, quotes, tree, root, charts, tabs, sizes }) => (
  <Terminal $top={top} $left={left}>
    <TitleBar>
      <XmLogo size={14} dim />
      <h2>37039971: XMTrading-Demo 5 - デモ口座 - Tradexfin Limited - {symbol}</h2>
      <WindowButtons />
    </TitleBar>
    <MenuBar>
      {menu.map(([label, key]) => (
        <button key={label}>
          {label} (<u>{key}</u>)
        </button>
      ))}
    </MenuBar>
    <ToolRow $height={28}>
      <Handle />
      <Drop name="newChart" />
      <Drop name="profiles" />
      <Separator />
      <Tool $pressed aria-label="気配値"><Icon name="watch" /></Tool>
      <Tool aria-label="データ"><Icon name="cross" /></Tool>
      <Tool $pressed aria-label="ナビゲーター"><Icon name="favorites" /></Tool>
      <Tool $pressed aria-label="ターミナル"><Icon name="terminal" /></Tool>
      <Tool aria-label="テスター"><Icon name="tester" /></Tool>
      <Separator />
      <Tool $width={76}><Icon name="order" />新規注文</Tool>
      <Tool aria-label="エディタ"><Icon name="book" /></Tool>
      <Tool aria-label="クラウド"><Icon name="cloud" /></Tool>
      <Tool aria-label="シグナル"><Icon name="signal" /></Tool>
      <Tool $pressed $width={78}><Icon name="auto" />自動売買</Tool>
      <Separator />
      <Handle />
      <Tool aria-label="バー"><Icon name="bars" /></Tool>
      <Tool $pressed aria-label="ローソク"><Icon name="candles" /></Tool>
      <Tool $width={26} aria-label="ライン"><Icon name="line" /></Tool>
      <Separator />
      <Tool $width={26} aria-label="拡大"><Icon name="zoomIn" /></Tool>
      <Tool aria-label="縮小"><Icon name="zoomOut" /></Tool>
      <Tool $width={26} aria-label="整列"><Icon name="tiles" /></Tool>
      <Separator />
      <Tool $pressed aria-label="自動スクロール"><Icon name="scroll" /></Tool>
      <Tool aria-label="シフト"><Icon name="shift" /></Tool>
      <Separator />
      <Drop name="indicator" />
      <Drop name="clock" />
      <Drop name="template" />
      <Separator />
      <Spacer />
      <Tool aria-label="検索">
        <svg width="16" height="16">
          <circle cx="10" cy="6" r="4" fill="#fff" stroke="#3a6fd0" strokeWidth="1.6" />
          <path d="M7 9l-5 6" stroke="#3a4fa0" strokeWidth="2.4" />
        </svg>
      </Tool>
      <Tool $width={38} aria-label="通知">
        <svg width="24" height="22">
          <ellipse cx="8" cy="14" rx="7" ry="5" fill="#dcdcdc" stroke="#aaa" />
          <circle cx="14" cy="9" r="8" fill="#d8281c" />
          <text x="12" y="13" fill="#fff" fontSize="11">1</text>
        </svg>
      </Tool>
    </ToolRow>
    <ToolRow $height={26}>
      <Handle />
      <Tool $pressed aria-label="カーソル"><Icon name="cursor" /></Tool>
      <Tool aria-label="十字"><Icon name="crosshair" /></Tool>
      <Separator />
      <Tool $width={24} aria-label="垂直線"><Icon name="vline" /></Tool>
      <Tool aria-label="水平線"><Icon name="hline" /></Tool>
      <Tool aria-label="トレンド"><Icon name="trend" /></Tool>
      <Tool aria-label="チャネル"><Icon name="channel" /></Tool>
      <Tool aria-label="フィボナッチ"><Icon name="fibo" /></Tool>
      <Tool $color="#555"><b>A</b></Tool>
      <Tool $color="#555" aria-label="ラベル">
        <svg width="16" height="16">
          <rect x="1" y="1" width="14" height="14" fill="none" stroke="#666" strokeDasharray="1 1" />
          <text x="4" y="12" fontSize="12" fontWeight="bold" fill="#555">T</text>
        </svg>
      </Tool>
      <Drop name="arrows" width={32} />
      <Separator />
      <Handle />
      {["M1", "M5", "M15", "M30", "H1", "H4", "D1", "W1", "MN"].map((tf) => (
        <Period key={tf} $color="#555" $pressed={tf === "H4"}>{tf}</Period>
      ))}
      <Separator />
    </ToolRow>
    <Body $height={sizes.body}>
      <Side>
        <PanelHead>
          <h3>気配値表示: 14:23:49</h3>
          <CloseMark>×</CloseMark>
        </PanelHead>
        <ListBox $height={sizes.quotes}>
          <QuoteTable>
            <colgroup>
              <col />
              <col width="46" />
              <col width="47" />
            </colgroup>
            <thead>
              <tr>
                <th>通貨ペア</th>
                <th>Bid</th>
                <th>Ask</th>
              </tr>
            </thead>
            <tbody>
              {quotes.map(([pair, bid, ask]) => (
                <tr key={bid}>
                  <td>
                    <svg width="11" height="11">
                      <path d="M5 0l5 6H8v4H3V6H0z" fill="#2fa33a" stroke="#0d6a18" />
                    </svg>
                    {pair}...
                  </td>
                  <td>{bid}</td>
                  <td>{ask}</td>
                </tr>
              ))}
            </tbody>
          </QuoteTable>
          <SideScroll />
        </ListBox>
        <TabBar>
          <Tab $small $active>通貨ペアリスト</Tab>
          <Tab $small>ティックチャート</Tab>
        </TabBar>
        <PanelHead $active>
          <h3>ナビゲーター</h3>
          <CloseMark>×</CloseMark>
        </PanelHead>
        <ListBox $height={sizes.tree}>
          <Tree>
            <li>
              <Twisty aria-label="閉じる" />
              <FnIcon>f</FnIcon>
              {root}
            </li>
            {tree.map((name) => (
              <li key={name}>
                <FnIcon>f</FnIcon>
                {name}
              </li>
            ))}
          </Tree>
          <SideScroll offset={14} />
        </ListBox>
        <TabBar>
          <Tab $active>全般</Tab>
          <Tab>お気に入り</Tab>
        </TabBar>
      </Side>
      <MdiColumn>
        <Mdi>
          {charts.map((col, i) => (
            <MdiColumn key={i}>
              {col.map((c) => (
                <ChartPane key={c.title} data={c} />
              ))}
            </MdiColumn>
          ))}
        </Mdi>
        <TabBar $line $indent={5}>
          {tabs.map((t, i) => (
            <Tab key={t} $wide $active={i === 0}>{t}</Tab>
          ))}
          <Spacer />
          <svg width="34" height="18">
            <path d="M6 5l-4 4 4 4zM22 5l4 4-4 4z" fill="#777" />
          </svg>
        </TabBar>
      </MdiColumn>
    </Body>
    <Orders>
      <Rail>
        <CloseMark>×</CloseMark>
        <span>ターミナル</span>
      </Rail>
      <OrdersMain>
        <OrdersSheet $height={sizes.orders}>
          <table>
            <colgroup>
              {orderCols.map(([name, w], i) => (
                <col key={name + i} width={w} />
              ))}
            </colgroup>
            <thead>
              <tr>
                {orderCols.map(([name], i) => (
                  <th key={name + i}>
                    {name}
                    {i === 0 && <i>/</i>}
                  </th>
                ))}
              </tr>
            </thead>
            <tbody>
              <tr>
                <td colSpan={11}>
                  ◎&nbsp; <span>残高: 10 000 JPY</span>
                  <span>有効証拠金: 10 000</span>
                  <span>余剰証拠金: 10 000</span>
                </td>
                <td>0</td>
              </tr>
            </tbody>
          </table>
        </OrdersSheet>
        <TabBar $line $height={18} $indent={1}>
          <Tab $active>取引</Tab>
          {orderTabs.map((t) => (
            <SheetTab key={t}>
              {t}
              {t === "メールボックス" && <Unread>8</Unread>}
            </SheetTab>
          ))}
        </TabBar>
      </OrdersMain>
    </Orders>
    <StatusBar>
      <StatusCell $width={392}>F1キーでヘルプが表示されます</StatusCell>
      <StatusCell $pad={6}>Default</StatusCell>
      <StatusCell $width={70} />
      <StatusCell $width={72} />
      <StatusCell $width={72} />
      <StatusCell $width={154} $pad={5}>
        <svg width="24" height="14">
          {[0, 4, 8, 12, 16, 20].map((x, i) => (
            <g key={x}>
              <rect x={x} y="0" width="3" height={9 - i} fill="#7d8c1e" />
              <rect x={x} y={9 - i} width="3" height={5 + i} fill="#184a78" />
            </g>
          ))}
        </svg>
        918/1 kb
        <Spacer />
        <svg width="16" height="16">
          <path d="M2 16L16 2M7 16l9-9M12 16l4-4" stroke="#999" />
        </svg>
      </StatusCell>
    </StatusBar>
  </Terminal>
);

/* ---------- task manager ---------- */

const TaskManager = styled.section`
  position: absolute;
  left: 492px;
  top: 460px;
  width: 1003px;
  border: 2px solid #1a1a1a;
  border-top: 0;
  background: #dcdad5;
  font: 14px/22px ${uiFont};
  color: #1e1e1e;
`;

const TaskTitle = styled.header`
  height: 21px;
  display: flex;
  align-items: center;
  gap: 7px;
  padding: 0 4px 0 2px;
  background: linear-gradient(#555, #3a3a3a 45%, #1e1e1e 50%, #151515);
  color: #fff;

  h1 {
    flex: 1;
    margin: 0;
    padding-left: 24px;
    font: bold 13px/20px ${uiFont};
    font-feature-settings: "palt" 1;
    text-align: center;
  }
`;

const TaskMenu = styled.nav`
  height: 24px;
  display: flex;
  align-items: center;
  gap: 14px;
  padding: 0 9px;
  border-bottom: 1px solid #222;
  border-top: 1px solid #f5f5f2;
  font-size: 13px;
  font-feature-settings: "palt" 1;
`;

const Meters = styled.div`
  display: grid;
  grid-template-columns: 1fr 1fr;
  gap: 11px;
  padding: 16px 6px 11px 5px;
`;

const Meter = styled.div`
  position: relative;
  height: 25px;
  border: 1px solid #8c8a86;
  border-right-color: #f5f5f2;
  border-bottom-color: #f5f5f2;
  background: #c4c1bd;
  text-align: center;
  font-size: 13px;
  line-height: 23px;

  &::before {
    content: "";
    position: absolute;
    inset: 1px auto 1px 1px;
    width: ${(p) => p.$value}%;
    background: #4b6983;
    border-right: 1px solid #000;
    border-bottom: 1px solid #000;
  }
`;

const Processes = styled.div`
  display: flex;
  gap: 5px;
  margin: 0 6px;
`;

const Sheet = styled.div`
  flex: 1;
  height: 423px;
  border-left: 1px solid #000;
  border-top: 1px solid #000;
  border-bottom: 1px solid #f5f5f2;
  background: #fff;
  overflow: hidden;

  th {
    height: 24px;
    padding: 0 5px;
    background: #dcdad5;
    border-right: 1px solid #000;
    border-bottom: 1px solid #000;
    box-shadow: inset 1px 1px #f5f5f2;
    font-size: 13px;
  }

  th svg {
    float: right;
    margin: 8px 2px;
  }

  td {
    height: 22px;
    padding: 0 4px 0 5px;
    text-align: right;
  }

  td:nth-child(1) {
    padding-left: 20px;
    text-align: left;
  }

  td:nth-child(2) {
    text-align: left;
  }

  td:nth-child(4) {
    background: #ededed;
  }
`;

const Row = styled.tr`
  ${(p) =>
    p.$selected &&
    css`
      background: #4b6983;
      color: #fff;

      && td {
        background: #4b6983;
      }
    `}
`;

const TaskScroll = styled.div`
  width: 16px;
  display: flex;
  flex-direction: column;
  background: #c4c1bd;
  border: 1px solid #8c8a86;

  button,
  span {
    height: 14px;
    display: grid;
    place-items: center;
    background: #dcdad5;
    border: 1px solid #f5f5f2;
    border-right-color: #000;
    border-bottom-color: #000;
  }

  span {
    height: 124px;
  }

  button:last-child {
    margin-top: auto;
  }
`;

const TaskFoot = styled.footer`
  display: flex;
  justify-content: space-between;
  padding: 10px 6px 6px 5px;
`;

const PushButton = styled.button`
  height: 32px;
  padding: 0 8px;
  display: flex;
  align-items: center;
  gap: 5px;
  font-size: ${(p) => (p.$down ? 13 : 14)}px;
  border: 1px solid #f5f5f2;
  font-feature-settings: "palt" 1;
  ${(p) =>
    p.$down
      ? css`
          background: #c4c1bd;
          border-top-color: #000;
          border-left-color: #000;
        `
      : css`
          padding: 0 17px;
          border-right-color: #000;
          border-bottom-color: #000;
        `}
`;

const Highlight = styled.div`
  position: absolute;
  left: 11px;
  top: 116px;
  width: 552px;
  height: 60px;
  border: 6px solid #dd0510;
  border-radius: 3px;
`;

const PowerIcon = ({ size = 16 }) => (
  <svg width={size} height={size} viewBox="0 0 16 16">
    <rect width="16" height="16" rx="1" fill="#cf2f3a" />
    <path d="M5 5a4.5 4.5 0 1 0 6 0M8 3v5" stroke="#fff" strokeWidth="1.8" fill="none" />
  </svg>
);

const PulseIcon = ({ width = 14, height = 12 }) => (
  <svg width={width} height={height} viewBox="0 0 22 18" preserveAspectRatio="none">
    <rect x=".5" y=".5" width="21" height="17" fill="#2f6e96" stroke="#c5d3dd" />
    <path d="M1 9h6l2-4 2 8 2-5 1 1h7" stroke="#fff" fill="none" strokeWidth="1.4" />
  </svg>
);

const processes = [
  ["terminal.exe", "2%", "132.6 MB", "2.0 GB", "4055", "S", "1"],
  ["terminal.exe", "1%", "129.6 MB", "2.0 GB", "4443", "S", "1"],
  ["Xorg", "0%", "89.1 MB", "730.8 MB", "2564", "S", "2557"],
  ["nm-applet", "0%", "69.2 MB", "550.2 MB", "1144", "S", "1"],
  ["lxpanel", "0%", "47.1 MB", "1.3 GB", "2693", "S", "2563"],
  ["fcitx", "0%", "41.6 MB", "97.1 MB", "1041", "S", "1"],
  ["fcitx", "0%", "39.2 MB", "94.5 MB", "2669", "S", "1"],
  ["lxpanel", "0%", "37.1 MB", "1.1 GB", "1070", "S", "935"],
  ["pcmanfm", "0%", "35.8 MB", "591.1 MB", "2694", "S", "2563"],
  ["pcmanfm", "0%", "34.5 MB", "526.4 MB", "1076", "S", "935"],
  ["goa-daemon", "0%", "33.9 MB", "538.9 MB", "1220", "S", "922"],
  ["mozc_server", "0%", "27.9 MB", "71.9 MB", "1186", "S", "1041"],
  ["lxtask", "0%", "25.2 MB", "190.9 MB", "3644", "R", "2693"],
  ["winedevice.exe", "0%", "24.6 MB", "2.2 GB", "4018", "S", "1"],
  ["explorer.exe", "0%", "22.6 MB", "1.8 GB", "4008", "S", "1"],
  ["openbox", "0%", "22.0 MB", "84.2 MB", "2688", "S", "2563"],
  ["openbox", "0%", "19.9 MB", "82.8 MB", "1064", "S", "935"],
  ["winedevice.exe", "0%", "16.8 MB", "1.9 GB", "4006", "S", "1"],
];

const processCols = [
  ["コマンド", 333],
  ["ユーザー", 78],
  ["CPU%", 66],
  ["RSS", 69],
  ["VM サイズ", 88],
  ["PID", 49],
  ["状態", 53],
  ["優先度", 66],
  ["PPID"],
];

/* ---------- desktop ---------- */

const Desktop = styled.main`
  position: relative;
  min-height: 100vh;
  background: #414141;
  overflow: hidden;
`;

const Shortcut = styled.a`
  position: absolute;
  left: 8px;
  top: ${(p) => p.$top}px;
  width: 104px;
  display: flex;
  flex-direction: column;
  align-items: center;
  font: 16px/22px ${uiFont};
  font-feature-settings: "palt" 1;
  color: #fff;
  text-shadow: 1px 1px 1px #000;
  white-space: nowrap;
`;

const ShortcutName = styled.span`
  width: 100%;
  height: 22px;
  text-align: center;
  background: ${(p) => (p.$selected ? "#4b6983" : "none")};
`;

const LinkBadge = () => (
  <>
    <rect width="9" height="9" fill="#fff" stroke="#000" />
    <path d="M2 2h4L5 3l3 3-1 1-3-3-1 1z" fill="#000" />
  </>
);

const People = () => (
  <>
    <path d="M4 42c2-6 8-3 8-9-3-6-3-14 4-13h16c7-1 7 7 4 13 0 6 6 3 8 9z" fill="#6c6c6c" />
    <path d="M10 46c1-7 8-4 9-10-5-7-3-17 5-17s10 10 5 17c1 6 8 3 9 10z" fill="#050505" />
  </>
);

const XMark = () => (
  <>
    <path d="M26 17l9-14h9L32 22z" fill="#1c5fae" />
    <path d="M5 3h12l26 41H31zM5 44l15-20 5 8-9 12z" fill="#000" />
  </>
);

const TaskBar = styled.footer`
  position: absolute;
  left: 0;
  right: 0;
  bottom: 0;
  height: 26px;
  display: flex;
  align-items: center;
  padding-left: 3px;
  border-top: 1px solid #000;
  background: linear-gradient(#8a8a8a, #4a4a4a 10%, #262626 40%, #000 44%, #050505 55%, #3a3a3a 85%, #777);
  font: 14px/22px ${uiFont};
  color: #eee;
`;

const Launcher = styled.button`
  width: ${(p) => p.$width || 27}px;
  height: 25px;
  display: grid;
  place-items: center;
`;

const Pager = styled.div`
  display: flex;
  height: 25px;
  margin: 0 6px 0 2px;

  i {
    width: 40px;
    background: #a09a90;
  }
`;

const TaskButton = styled.button`
  width: 150px;
  height: 25px;
  display: flex;
  align-items: center;
  gap: 2px;
  padding-left: 3px;
  overflow: hidden;
  white-space: nowrap;
  background: ${(p) => (p.$down ? "#c4c1bd" : "#dcdad5")};
  border: 1px solid ${(p) => (p.$down ? "#777" : "#f8f8f5")};
  border-right-color: #222;
  color: #222;
  font-feature-settings: "palt" 1;
`;

const TaskLabel = styled.span`
  font-size: ${(p) => (p.$kana ? 13 : 14)}px;
`;

const Tray = styled.div`
  display: flex;
  align-items: center;
  gap: 6px;
  padding-right: 5px;

  i {
    width: 36px;
    height: 21px;
    background: #000;
  }

  time {
    padding: 0 3px;
    font-size: 14px;
  }
`;

const quotesLeft = [
  ["USD", "0.93753", "0.93772"],
  ["GBP", "1.20976", "1.20995"],
  ["EUR", "1.06139", "1.06156"],
  ["USD", "136.755", "136.770"],
  ["USD", "1.35668", "1.35691"],
];

const quotesRight = [...quotesLeft, ["AUD", "0.67319", "0.67335"]];

const App = () => (
  <>
    <GlobalStyle />
    <Desktop>
      <Shortcut href="#rdp" $top={548}>
        <ShortcutName>RDP passw</ShortcutName>
      </Shortcut>
      <Shortcut href="#trash" $top={14}>
        <svg width="30" height="12">
          <ellipse cx="15" cy="6" rx="14" ry="5" fill="#aaa" />
        </svg>
      </Shortcut>
      <TradingWindow
        top={18}
        left={5}
        symbol="EURUSD,H4"
        quotes={quotesLeft}
        root="ビル・ウィリアムス"
        tree={["Accelerator Oscillator", "Alligator", "Awesome Oscillator", "Fractals", "Gator Oscillator", "Market Facilitation"]}
        charts={[
          [leftCharts[0][0], leftCharts[1][0]],
          [leftCharts[0][1], leftCharts[1][1]],
        ]}
        tabs={["EURUSD,H4", "USDCHF,H4", "GBPUSD,H4", "USDJPY,H4"]}
        sizes={{ body: 290, quotes: 106, tree: 109, orders: 109 }}
      />
      <TradingWindow
        top={6}
        left={775}
        symbol="USDCAD,H4"
        quotes={quotesRight}
        root="トレンド"
        tree={["Average Directional", "Bollinger Bands", "Envelopes", "Ichimoku Kinko Hyo", "Moving Average", "Parabolic SAR", "Standard Deviation"]}
        charts={rightCharts}
        tabs={["USDCAD,H4", "USDCHF,H4", "GBPUSD,H4", "USDJPY,H4", "AUDUSD,H1", "EURGBP,H1", "EURAUD,H1"]}
        sizes={{ body: 329, quotes: 127, tree: 127, orders: 109 }}
      />

      <Shortcut href="#vps" $top={609}>
        <svg width="48" height="48" viewBox="0 0 48 48"><XMark /></svg>
        <ShortcutName>「VPS」に関...</ShortcutName>
      </Shortcut>
      <Shortcut href="#users" $top={697}>
        <svg width="48" height="48" viewBox="0 0 48 48" overflow="visible">
          <LinkBadge />
          <People />
        </svg>
        <ShortcutName>ユーザ設定</ShortcutName>
      </Shortcut>
      <Shortcut href="#xm" $top={777}>
        <svg width="48" height="48">
          <XmLogo size={48} />
          <LinkBadge />
        </svg>
        <ShortcutName>XMTrading</ShortcutName>
      </Shortcut>
      <Shortcut href="#editor" $top={873}>
        <svg width="48" height="48">
          <path d="M20 2l26 20-18 22L6 26z" fill="#f4ead0" stroke="#9a7a40" />
          <path d="M16 2c6 6 20 6 26 20L26 38 4 24c8-4 10-12 12-22z" fill="#fbf7d0" stroke="#b59a50" />
          <path d="M0 25l24 14v8L0 33z" fill="#d9a514" />
          <path d="M24 39l23-14v5L24 47z" fill="#f5dc90" stroke="#a07a20" />
          <path d="M0 25l5-3 20 15 20-14 2 2-23 14z" fill="#f7e38a" />
          <circle cx="20" cy="17" r="6" fill="none" stroke="#3a8f2f" strokeWidth="3" />
          <circle cx="27" cy="16" r="5" fill="#3c83c4" />
          <circle cx="23" cy="23" r="5" fill="none" stroke="#5da838" strokeWidth="2" />
        </svg>
        <ShortcutName>MetaEditor 4</ShortcutName>
      </Shortcut>
      <Shortcut href="#xm2" $top={969}>
        <XmLogo size={48} dim />
        <ShortcutName $selected>XMTrading···</ShortcutName>
      </Shortcut>

      <TaskManager>
        <TaskTitle>
          <PulseIcon />
          <h1>タスクマネージャ</h1>
          <WindowButtons color="#fff" />
        </TaskTitle>
        <TaskMenu>
          <button>ファイル(<u>F</u>)</button>
          <button>表示(<u>V</u>)</button>
          <button>ヘルプ(<u>H</u>)</button>
        </TaskMenu>
        <Meters>
          <Meter $value={6}>CPU 使用量: 6 %</Meter>
          <Meter $value={18}>メモリ: 3927 MB 中の 699 MB が使用中</Meter>
        </Meters>
        <Processes>
          <Sheet>
            <table>
              <colgroup>
                {processCols.map(([name, w]) => (
                  <col key={name} width={w} />
                ))}
              </colgroup>
              <thead>
                <tr>
                  {processCols.map(([name]) => (
                    <th key={name}>
                      {name}
                      {name === "RSS" && (
                        <svg width="9" height="6"><path d="M0 0h9l-4 6z" /></svg>
                      )}
                    </th>
                  ))}
                </tr>
              </thead>
              <tbody>
                {processes.map(([cmd, cpu, rss, vm, pid, state, ppid], i) => (
                  <Row key={pid} $selected={i === 8}>
                    <td>{cmd}</td>
                    <td>lxde</td>
                    <td>{cpu}</td>
                    <td>{rss}</td>
                    <td>{vm}</td>
                    <td>{pid}</td>
                    <td>{state}</td>
                    <td>0</td>
                    <td>{ppid}</td>
                  </Row>
                ))}
              </tbody>
            </table>
          </Sheet>
          <TaskScroll>
            <button aria-label="上へ"><svg width="7" height="4"><path d="M0 4h7L3 0z" fill="#888" /></svg></button>
            <span />
            <button aria-label="下へ"><svg width="7" height="4"><path d="M0 0h7L3 4z" /></svg></button>
          </TaskScroll>
        </Processes>
        <TaskFoot>
          <PushButton $down>さらに詳しく</PushButton>
          <PushButton>
            <PowerIcon />
            <span><u>Q</u>uit</span>
          </PushButton>
        </TaskFoot>
        <Highlight />
      </TaskManager>

      <TaskBar>
        <Launcher $width={30} aria-label="メニュー">
          <svg width="28" height="22">
            <path d="M0 13L19 1l9 21-9-14L5 21l9-12z" fill="#c9c9c9" stroke="#666" strokeWidth=".6" />
          </svg>
        </Launcher>
        <Launcher aria-label="ファイル">
          <svg width="20" height="18">
            <rect x="2" y="3" width="16" height="13" fill="#1b1b1b" />
            <path d="M5 8h9l2 5H5z" fill="#fff" />
          </svg>
        </Launcher>
        <Launcher aria-label="Firefox">
          <svg width="22" height="22">
            <circle cx="11" cy="11" r="10" fill="#d4601a" />
            <circle cx="11" cy="9" r="6" fill="#8fb4d9" />
            <path d="M7 4l3-3 4 2-2 5-3 1z" fill="#dbe8f5" />
            <path d="M2 6c0 7 3 9 7 8 2-1 0-3-2-4 4-1 7 2 6 5 4-1 6-4 5-8 3 7-1 14-8 14S-1 14 2 6z" fill="#f08a24" />
          </svg>
        </Launcher>
        <Launcher aria-label="Chrome">
          <svg width="24" height="24">
            <circle cx="12" cy="12" r="11" fill="#fbc116" />
            <path d="M12 12L2 7a11 11 0 0 1 20 0z" fill="#e33b2e" />
            <path d="M12 12L2 7a11 11 0 0 0 9 16z" fill="#2da94f" />
            <circle cx="12" cy="12" r="6" fill="#fff" />
            <circle cx="12" cy="12" r="4" fill="#4285f4" />
          </svg>
        </Launcher>
        <Launcher aria-label="端末">
          <svg width="20" height="20">
            <rect x="1" y="1" width="18" height="13" fill="#222" stroke="#aaa" />
            <path d="M8 14h4v3h3v2H5v-2h3z" fill="#ddd" />
          </svg>
        </Launcher>
        <Launcher aria-label="タスク"><PulseIcon width={22} height={18} /></Launcher>
        <Launcher aria-label="ユーザ">
          <svg width="20" height="20" viewBox="0 8 48 40"><People /></svg>
        </Launcher>
        <Launcher aria-label="VPS">
          <svg width="22" height="22" viewBox="0 0 48 48"><XMark /></svg>
        </Launcher>
        <Launcher $width={34} aria-label="ウィンドウ">
          <svg width="20" height="18">
            <rect x="6" y="5" width="13" height="12" fill="#e9e9e9" stroke="#777" />
            <rect x="1" y="1" width="13" height="12" fill="#fafafa" stroke="#777" />
          </svg>
        </Launcher>
        <Pager>
          <svg width="40" height="25">
            <rect width="40" height="25" fill="#35556f" />
            <path d="M1 2h16v9H1zM17 2h22v10H17zM11 11h19v12H11z" fill="#4b7396" stroke="#fff" />
          </svg>
          <i />
        </Pager>
        <TaskButton $down>
          <PulseIcon width={16} height={12} />
          <TaskLabel $kana>タスクマネージャ</TaskLabel>
        </TaskButton>
        <TaskButton>
          <XmLogo size={20} />
          <TaskLabel>37039971: XMTr···</TaskLabel>
        </TaskButton>
        <TaskButton>
          <XmLogo size={20} />
          <TaskLabel>37039971: XMTr···</TaskLabel>
        </TaskButton>
        <Spacer />
        <Tray>
          <i />
          <svg width="20" height="14">
            <path d="M1 5h4l5-5v14L5 9H1zM13 3q4 4 0 8M16 1q5 6 0 12" fill="#000" stroke="#000" />
          </svg>
          <svg width="20" height="18">
            <path d="M10 5V2H6" stroke="#ddd" fill="none" />
            <rect x="1" y="6" width="18" height="11" fill="none" stroke="#ddd" />
            <path d="M3 9h14M3 11h14M4 14h12" stroke="#ddd" strokeWidth="1.5" strokeDasharray="2 1" />
          </svg>
          <time>21:23</time>
          <svg width="20" height="20">
            <rect x="1" y="1" width="18" height="13" fill="#5d5aa0" stroke="#bbb" />
            <rect x="7" y="6" width="6" height="5" fill="#e0b43a" />
            <path d="M8 6V4h4v2" stroke="#e0b43a" fill="none" />
            <path d="M8 14h4v3h3v2H5v-2h3z" fill="#ddd" />
          </svg>
          <PowerIcon size={18} />
        </Tray>
      </TaskBar>
    </Desktop>
  </>
);

export default App;
